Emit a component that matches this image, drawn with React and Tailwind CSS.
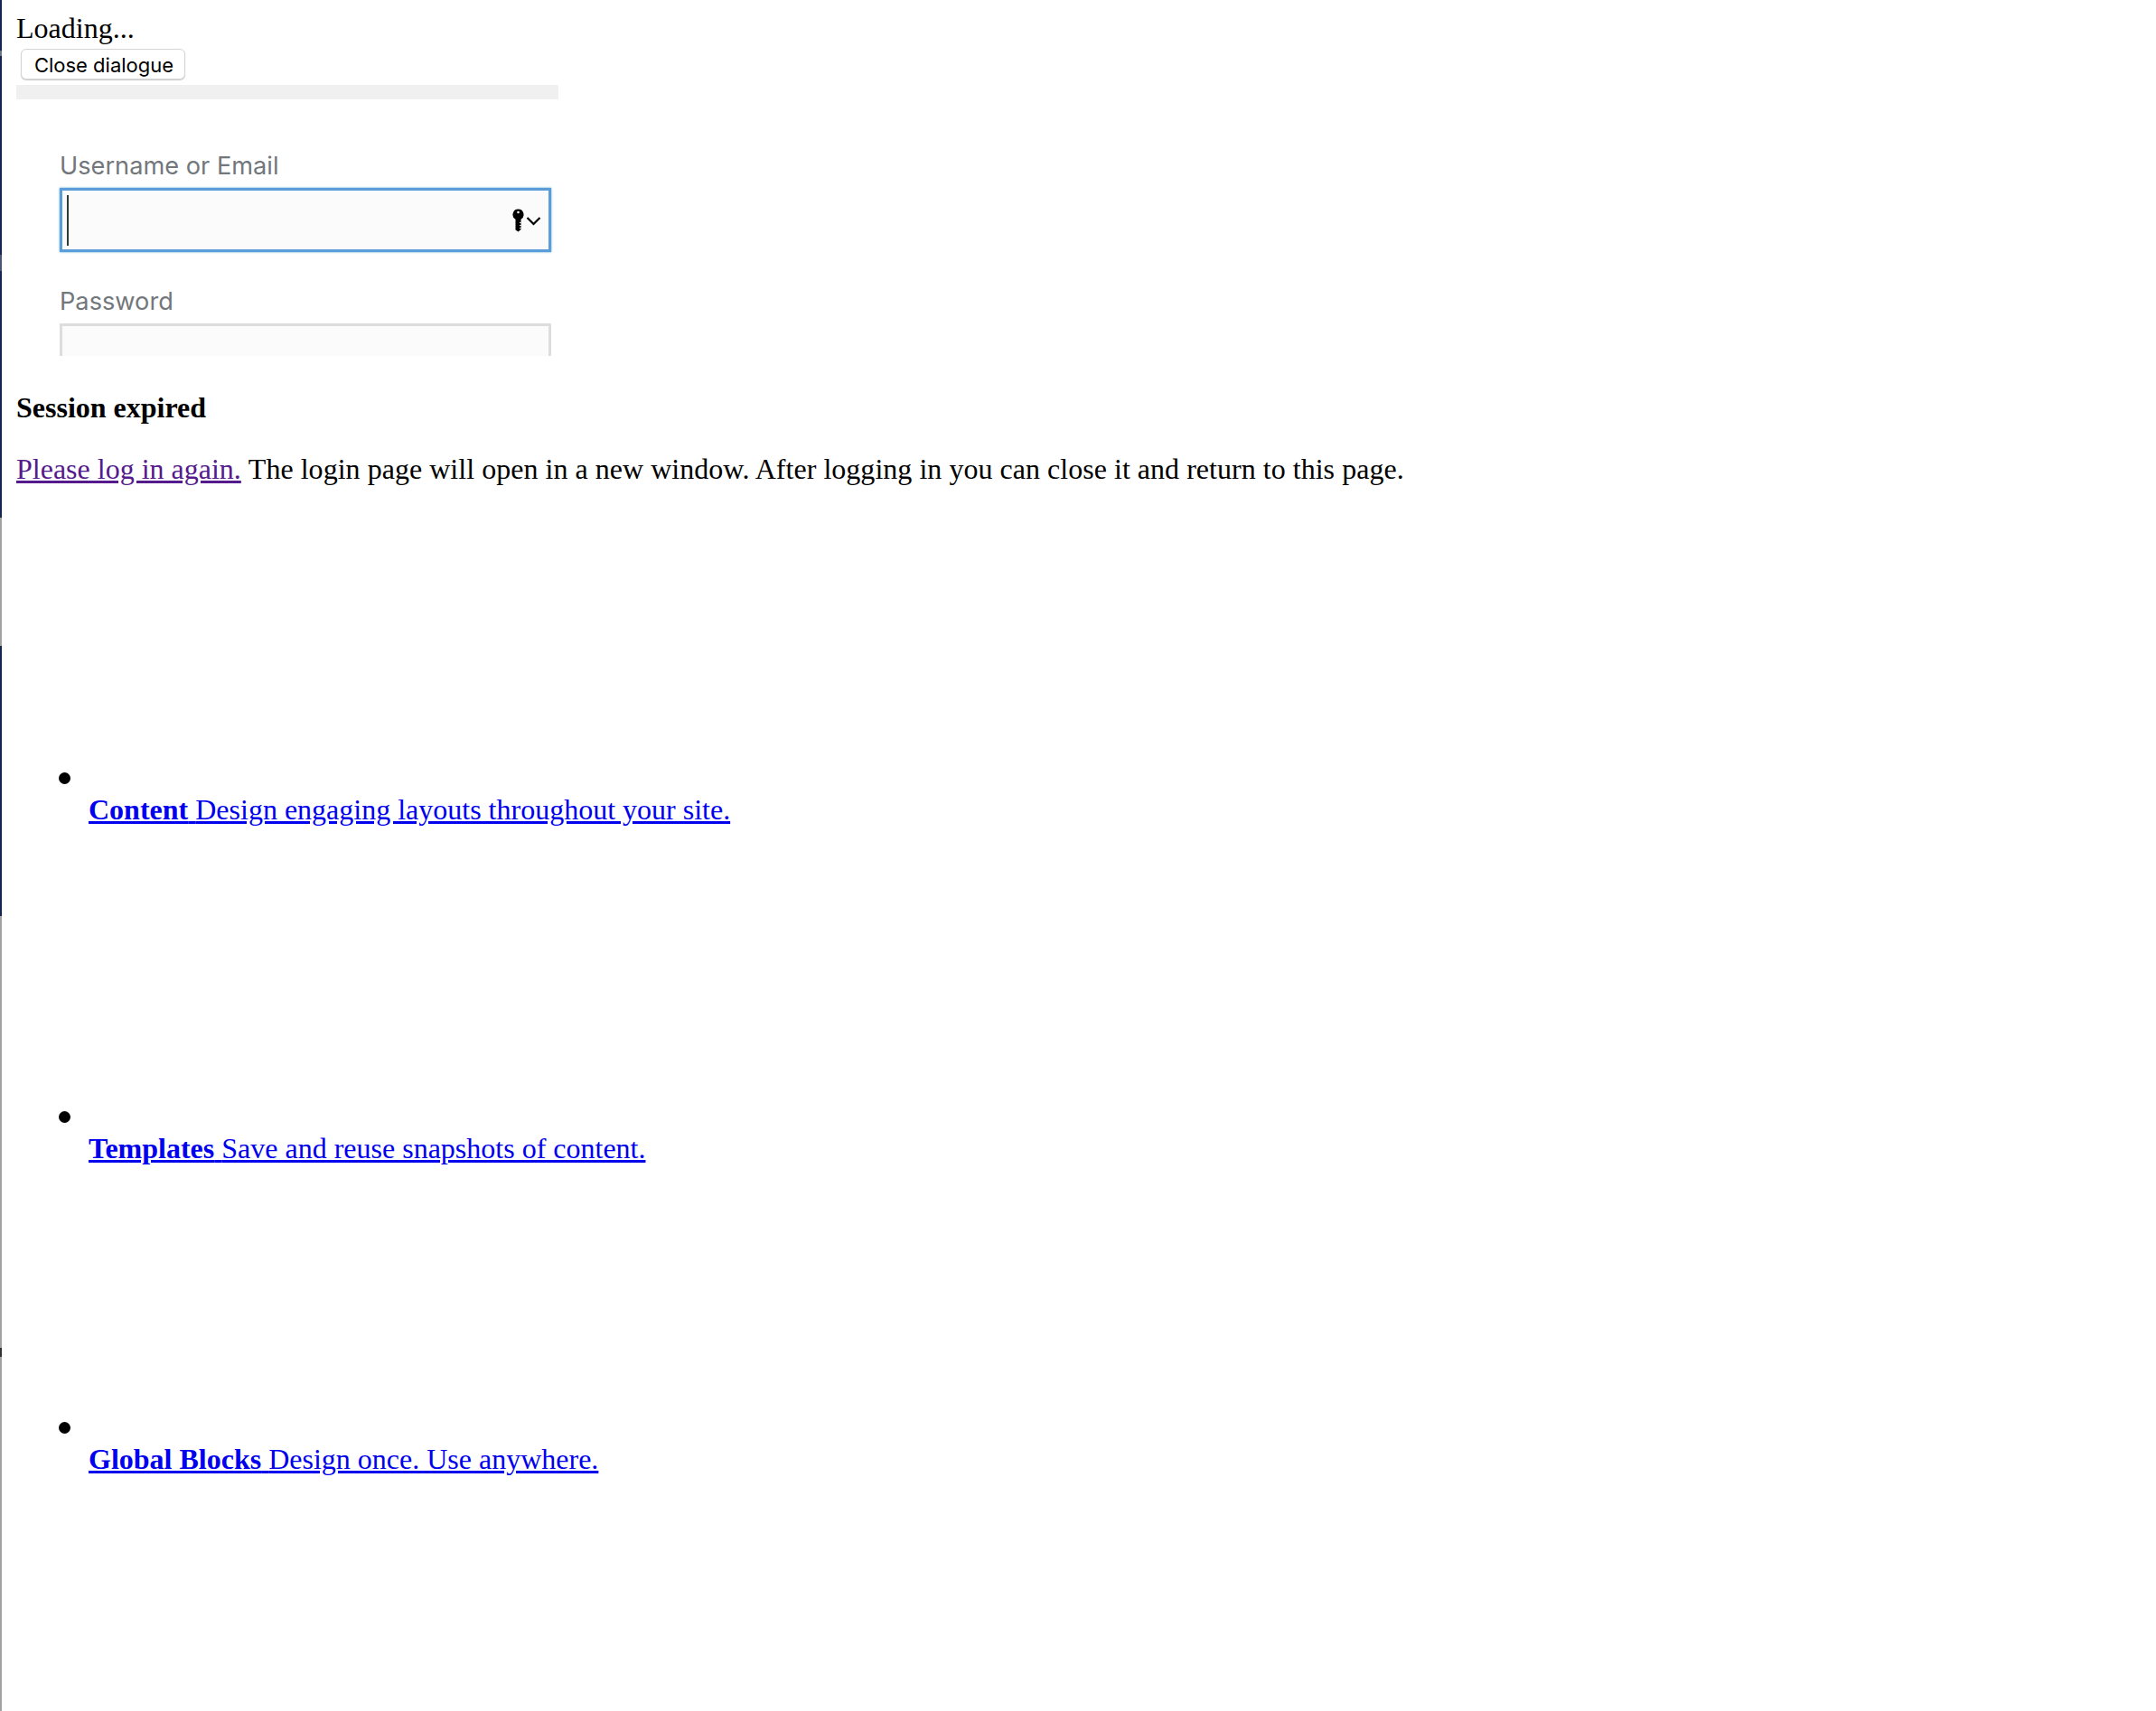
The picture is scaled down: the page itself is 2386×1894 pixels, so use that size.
const stripSegments = [
  { h: 56, c: 'bg-[#14264f]' },
  { h: 6, c: 'bg-[#6b7488]' },
  { h: 220, c: 'bg-[#14264f]' },
  { h: 18, c: 'bg-[#4a5672]' },
  { h: 273, c: 'bg-[#14264f]' },
  { h: 142, c: 'bg-[#a3a3a3]' },
  { h: 299, c: 'bg-[#14264f]' },
  { h: 478, c: 'bg-[#a3a3a3]' },
  { h: 10, c: 'bg-[#333333]' },
  { h: 392, c: 'bg-[#a3a3a3]' },
]

const features = [
  { title: 'Content', text: 'Design engaging layouts throughout your site.', pad: 'pt-[304px]' },
  { title: 'Templates', text: 'Save and reuse snapshots of content.', pad: 'pt-[302px]' },
  { title: 'Global Blocks', text: 'Design once. Use anywhere.', pad: 'pt-[271px]' },
]

function KeyIcon() {
  return (
    <svg width="32" height="26" viewBox="0 0 32 26" className="block">
      <path d="M6.5 0.5a6 6 0 0 1 3 11.2V23l-3 2.5-3-2V11.7A6 6 0 0 1 6.5 0.5z" fill="#000" />
      <circle cx="6.5" cy="4" r="1.3" fill="#fbfbfb" />
      <path d="M9.5 15.5h-1.5M9.5 18.5h-1.5M9.5 21.5h-1.5" stroke="#fbfbfb" strokeWidth="1" />
      <path d="M16.5 10l7 7 7-7" fill="none" stroke="#000" strokeWidth="2.2" />
    </svg>
  )
}

export default function App() {
  return (
    <div className="flex h-[1894px] overflow-hidden bg-white text-[32px] leading-[37px] text-black font-['Liberation_Serif',serif]">
      <div className="w-[2px] shrink-0 flex flex-col">
        {stripSegments.map((s, i) => (
          <div key={i} className={s.c} style={{ height: s.h }} />
        ))}
      </div>

      <div className="flex-1 pl-[16px] pt-[13px]">
        <div>Loading...</div>

        <button className="block ml-[5px] mt-[4px] h-[34px] w-[182px] rounded-[6px] border border-[#d4d4d4] bg-white pl-[2px] pt-[1px] shadow-[0_1px_1px_rgba(0,0,0,0.2)] text-center text-[22px] leading-[30px] font-['Inter',sans-serif]">
          Close dialogue
        </button>

        <div className="mt-[6px] h-[16px] w-[600px] bg-[#f0f0f0]" />

        <div className="h-[284px] w-[600px] overflow-hidden pl-[48px] font-['Inter',sans-serif] text-[#72777c]">
          <div className="pt-[57px] text-[27.2px] leading-[34px]">Username or Email</div>
          <div className="mt-[7px] flex h-[71px] w-[544px] items-center justify-between border-[3px] border-[#5b9dd9] bg-[#fbfbfb] pl-[5px] pr-[8px] shadow-[0_0_2px_rgba(30,140,190,0.8)]">
            <div className="h-[56px] w-[2px] bg-[#32373c]" />
            <KeyIcon />
          </div>
          <div className="mt-[38px] text-[27.2px] leading-[34px]">Password</div>
          <div className="mt-[7px] h-[71px] w-[544px] border-[3px] border-[#ddd] bg-[#fbfbfb]" />
        </div>

        <h3 className="mt-[39px] font-bold">Session expired</h3>
        <p className="mt-[31px]">
          <a href="#" className="text-[#551a8b] underline">Please log in again.</a>{' '}
          <span className="tracking-[0.03px]">
            The login page will open in a new window. After logging in you can close it and return to this page.
          </span>
        </p>

        <ul className="list-disc pl-[80px] marker:text-[44px]">
          {features.map((f) => (
            <li key={f.title} className={f.pad}>
              <br />
              <a href="#" className="block -mt-[5px] text-[#0000ee] underline">
                <strong>{f.title}</strong> {f.text}
              </a>
            </li>
          ))}
        </ul>
      </div>
    </div>
  )
}
